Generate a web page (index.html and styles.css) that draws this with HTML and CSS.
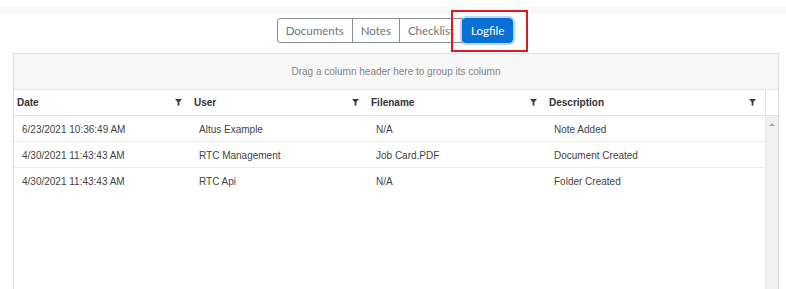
FILE: index.html
```html
<!DOCTYPE html>
<html>
<head>
<meta name="viewport" content="width=device-width, initial-scale=1.0" />
<link rel="stylesheet" href="styles.css">
</head>
<body>
<div class="topstrip"></div>
<div class="tabs">
	<div class="btn-group">
		<button class="btn" type="button">Documents</button>
		<button class="btn" type="button">Notes</button>
		<button class="btn" type="button">Checklist</button>
		<button class="btn active" type="button">Logfile<span class="highlight"></span></button>
	</div>
</div>
<div class="grid">
	<div class="group-panel">Drag a column header here to group its column</div>
	<div class="grid-header">
		<div class="th">Date<svg class="filter" viewBox="0 0 8 8"><path d="M0 0H8L5 3.5V8L3 7V3.5Z"/></svg></div>
		<div class="th">User<svg class="filter" viewBox="0 0 8 8"><path d="M0 0H8L5 3.5V8L3 7V3.5Z"/></svg></div>
		<div class="th">Filename<svg class="filter" viewBox="0 0 8 8"><path d="M0 0H8L5 3.5V8L3 7V3.5Z"/></svg></div>
		<div class="th">Description<svg class="filter" viewBox="0 0 8 8"><path d="M0 0H8L5 3.5V8L3 7V3.5Z"/></svg></div>
		<div class="th th-scroll"></div>
	</div>
	<div class="grid-body">
		<div class="rows">
			<div class="row">
				<div class="td">6/23/2021 10:36:49 AM</div>
				<div class="td">Altus Example</div>
				<div class="td">N/A</div>
				<div class="td">Note Added</div>
			</div>
			<div class="row">
				<div class="td">4/30/2021 11:43:43 AM</div>
				<div class="td">RTC Management</div>
				<div class="td">Job Card.PDF</div>
				<div class="td">Document Created</div>
			</div>
			<div class="row">
				<div class="td">4/30/2021 11:43:43 AM</div>
				<div class="td">RTC Api</div>
				<div class="td">N/A</div>
				<div class="td">Folder Created</div>
			</div>
		</div>
		<div class="scrollbar"><span class="arrow-up"></span></div>
	</div>
</div>
</body>
</html>
```

FILE: styles.css
```css
html, body {margin:0px; padding:0px; overflow:hidden;}
body {
	background: #fff;
	font-family: "Liberation Sans", Arial, sans-serif;
	font-size: 10px;
	color: #444;
}

.topstrip {
	margin-top: 7px;
	height: 7px;
	background: #f6f7f8;
}

.tabs {
	display: flex;
	justify-content: center;
	padding: 4px 0 10px 4px;
}
.btn-group {
	display: inline-flex;
}
.btn {
	position: relative;
	height: 25px;
	padding: 0 8px;
	margin-left: -1px;
	border: 1px solid #8a8f94;
	background: #fff;
	color: #6c757d;
	font-family: Lato, "Open Sans", sans-serif;
	font-size: 11.5px;
	cursor: pointer;
}
.btn:first-child {
	margin-left: 0;
	border-radius: 3px 0 0 3px;
}
.btn.active {
	background: #0b6fd8;
	border-color: #0b6fd8;
	color: #fff;
	border-radius: 4px;
	padding: 0 8px;
	box-shadow: 0 0 0 2px rgba(110, 165, 235, 0.45);
}
.highlight {
	position: absolute;
	left: -12px;
	top: -9px;
	width: 77px;
	height: 42px;
	box-sizing: border-box;
	border: 2px solid #dd1a22;
}

.grid {
	margin: 0 7px 0 13px;
	height: 245px;
	border: 1px solid #dedede;
	border-bottom: none;
}
.group-panel {
	height: 35px;
	line-height: 35px;
	background: #f7f7f7;
	border-bottom: 1px solid #e6e6e6;
	text-align: center;
	color: #858585;
}

.grid-header, .row {
	display: grid;
	grid-template-columns: 177px 177px 178px 219px 13px;
}
.row {
	grid-template-columns: 177px 177px 178px 219px;
}
.grid-header {
	border-bottom: 1px solid #e3e3e3;
}
.th {
	height: 25px;
	display: flex;
	align-items: center;
	justify-content: space-between;
	padding: 0 9px 0 3px;
	font-weight: bold;
	color: #333;
}
.th-scroll {
	padding: 0;
	border-left: 1px solid #e3e3e3;
}
.filter {
	width: 7px;
	height: 7px;
	fill: #3a3a3a;
}

.grid-body {
	display: flex;
	height: 180px;
}
.rows {
	flex: 1;
}
.row {
	border-bottom: 1px solid #ececec;
}
.row:last-child {
	border-bottom: none;
}
.td {
	height: 25px;
	line-height: 27px;
	padding-left: 8px;
	white-space: nowrap;
}
.scrollbar {
	width: 13px;
	background: #f0f0f0;
	border-left: 1px solid #e8e8e8;
	display: flex;
	justify-content: center;
}
.arrow-up {
	margin-top: 7px;
	width: 0;
	height: 0;
	border-left: 3px solid transparent;
	border-right: 3px solid transparent;
	border-bottom: 3px solid #a8a8a8;
}
```
